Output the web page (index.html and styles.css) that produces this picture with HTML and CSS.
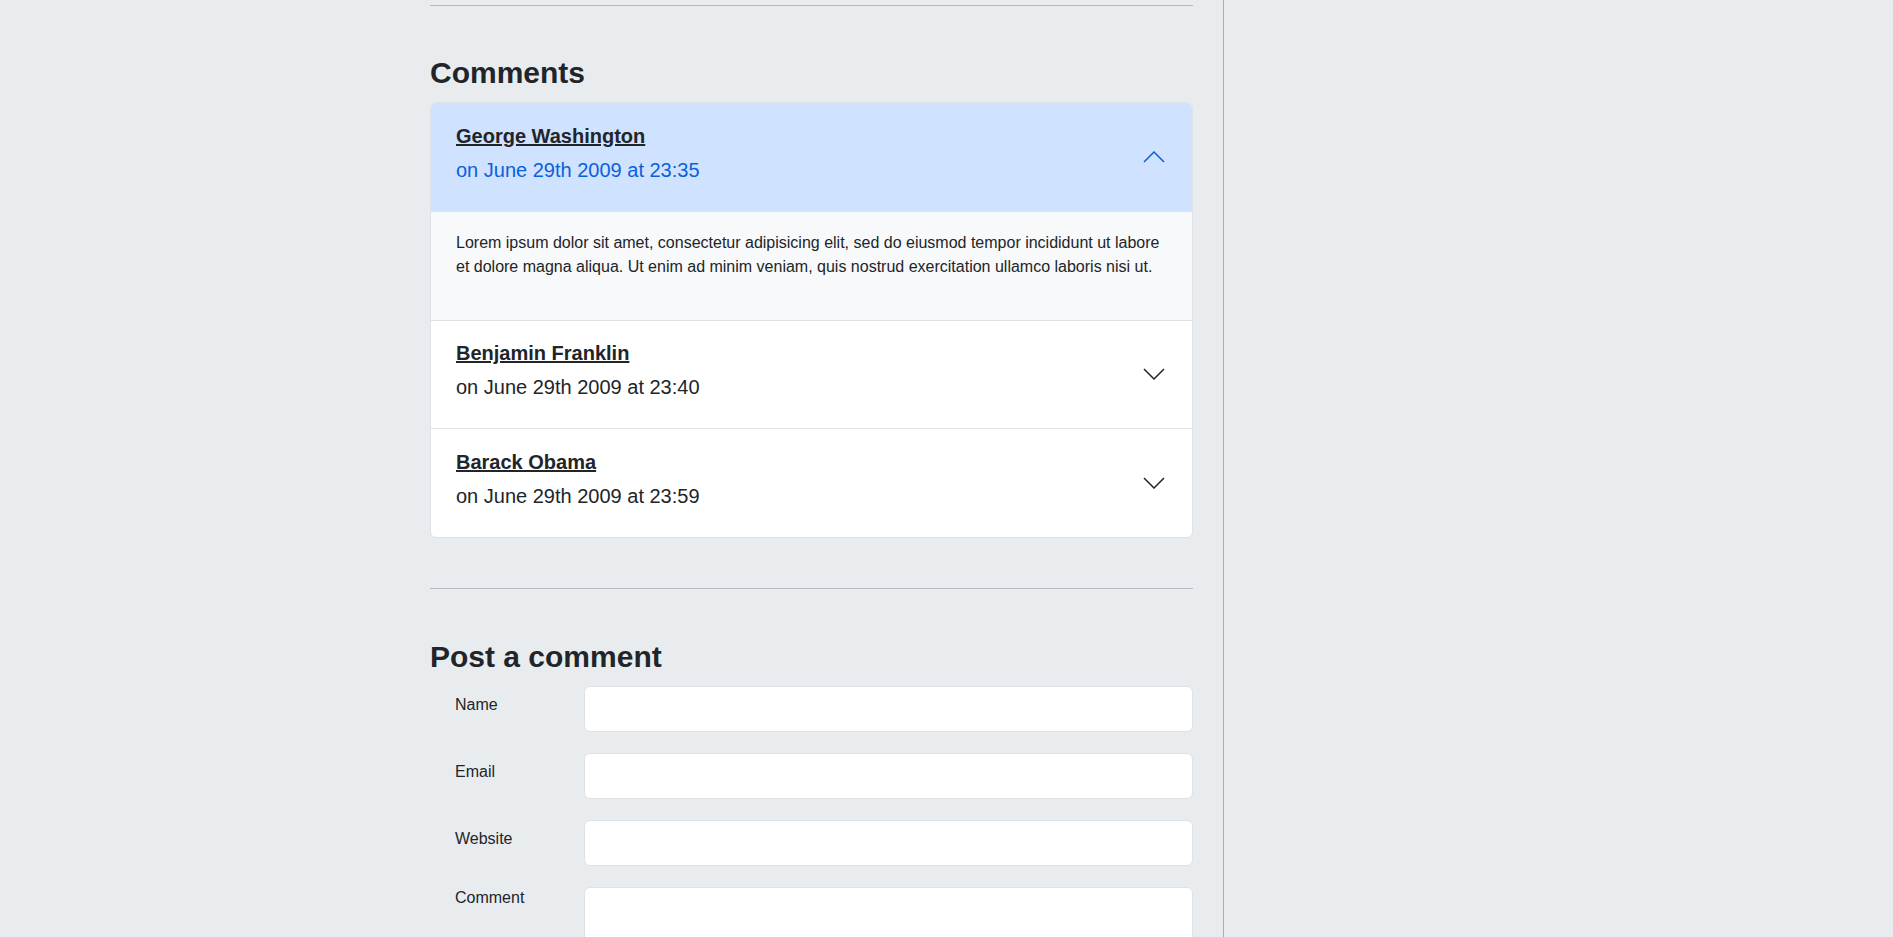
FILE: index.html
```html
<!DOCTYPE html>
<html lang="en">
<head>
<meta charset="utf-8">
<title>Comments</title>
<link rel="stylesheet" href="styles.css">
</head>
<body>
<div class="page">
  <main class="main">
    <hr class="rule rule-top">
    <section class="comments">
      <h2 class="heading">Comments</h2>
      <div class="accordion">
        <div class="item">
          <div class="item-header is-open">
            <div class="meta">
              <a class="author" href="#">George Washington</a>
              <div class="date">on June 29th 2009 at 23:35</div>
            </div>
            <svg class="chevron" width="22" height="12" viewBox="0 0 22 12"><polyline points="1,11 11,1 21,11" fill="none" stroke="currentColor" stroke-width="1.5"/></svg>
          </div>
          <div class="item-body">
            <p>Lorem ipsum dolor sit amet, consectetur adipisicing elit, sed do eiusmod tempor incididunt ut labore et dolore magna aliqua. Ut enim ad minim veniam, quis nostrud exercitation ullamco laboris nisi ut.</p>
          </div>
        </div>
        <div class="item">
          <div class="item-header">
            <div class="meta">
              <a class="author" href="#">Benjamin Franklin</a>
              <div class="date">on June 29th 2009 at 23:40</div>
            </div>
            <svg class="chevron" width="22" height="12" viewBox="0 0 22 12"><polyline points="1,1 11,11 21,1" fill="none" stroke="currentColor" stroke-width="1.5"/></svg>
          </div>
        </div>
        <div class="item">
          <div class="item-header">
            <div class="meta">
              <a class="author" href="#">Barack Obama</a>
              <div class="date">on June 29th 2009 at 23:59</div>
            </div>
            <svg class="chevron" width="22" height="12" viewBox="0 0 22 12"><polyline points="1,1 11,11 21,1" fill="none" stroke="currentColor" stroke-width="1.5"/></svg>
          </div>
        </div>
      </div>
    </section>
    <hr class="rule rule-mid">
    <section class="post">
      <h2 class="heading">Post a comment</h2>
      <form class="form">
        <div class="form-row">
          <label class="form-label" for="name">Name</label>
          <input class="form-input" id="name" type="text">
        </div>
        <div class="form-row">
          <label class="form-label" for="email">Email</label>
          <input class="form-input" id="email" type="email">
        </div>
        <div class="form-row">
          <label class="form-label" for="website">Website</label>
          <input class="form-input" id="website" type="text">
        </div>
        <div class="form-row">
          <label class="form-label form-label-top" for="comment">Comment</label>
          <textarea class="form-input form-textarea" id="comment"></textarea>
        </div>
      </form>
    </section>
  </main>
  <aside class="sidebar"></aside>
</div>
</body>
</html>
```

FILE: styles.css
```css
html, body {
  margin: 0;
  padding: 0;
  background: #e9ecef;
  color: #212529;
  font-family: "Liberation Sans", Arial, sans-serif;
  font-size: 16px;
  line-height: 1.5;
}

.page {
  display: flex;
  min-height: 100vh;
  padding-left: 430px;
}

.main {
  width: 763px;
  flex: none;
}

.sidebar {
  flex: 1;
  margin-left: 30px;
  border-left: 1px solid #a9aeb3;
  min-height: 100vh;
}

.rule {
  border: 0;
  border-top: 1px solid #b6babe;
  height: 0;
  margin: 0;
}

.rule-top {
  margin-top: 5px;
  margin-bottom: 49px;
}

.rule-mid {
  margin-top: 50px;
  margin-bottom: 50px;
}

.heading {
  margin: 0 0 11px;
  font-size: 30px;
  line-height: 36px;
  font-weight: 700;
  color: #212529;
}

.accordion {
  background: #fff;
  border: 1px solid #dee2e6;
  border-radius: 6px;
  overflow: hidden;
}

.item + .item {
  border-top: 1px solid #dee2e6;
}

.item-header {
  display: flex;
  align-items: center;
  justify-content: space-between;
  padding: 15.5px 27px 24px 25px;
}

.item-header.is-open {
  background: #cfe2ff;
  color: #0c5fdc;
}

.meta {
  display: flex;
  flex-direction: column;
}

.author {
  font-size: 20px;
  line-height: 34px;
  font-weight: 700;
  color: #212529;
  text-decoration: underline;
}

.date {
  font-size: 20px;
  line-height: 34px;
}

.chevron {
  display: block;
  color: #212529;
  margin-top: 8px;
}

.is-open .chevron {
  color: #0c5fdc;
}

.item-body {
  background: #f8f9fa;
  border-top: 1px solid #dee2e6;
  padding: 19px 25px 25px;
}

.item-body p {
  margin: 0 0 16px;
  font-size: 16px;
  line-height: 24px;
}

.form {
  display: flex;
  flex-direction: column;
  gap: 21px;
}

.form-row {
  display: flex;
  align-items: flex-start;
}

.form-label {
  width: 129px;
  flex: none;
  padding: 7px 0 0 25px;
  font-size: 16px;
  line-height: 24px;
}

.form-label-top {
  padding-top: 0;
  margin-top: -1px;
}

.form-input {
  flex: 1;
  height: 46px;
  box-sizing: border-box;
  margin: 0;
  border: 1px solid #dee2e6;
  border-radius: 6px;
  background: #fff;
  font: inherit;
  padding: 6px 12px;
}

.form-textarea {
  height: 110px;
  resize: none;
}
```
